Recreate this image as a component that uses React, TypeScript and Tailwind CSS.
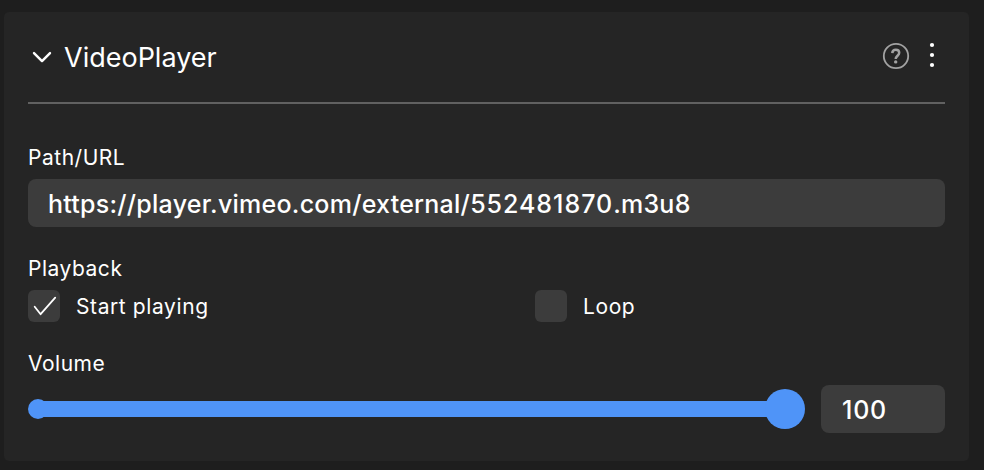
import React from "react";

function Label({ children, className }: { children: React.ReactNode; className: string }) {
  return (
    <div className={`whitespace-nowrap text-[21px] leading-7 tracking-[0.52px] ${className}`}>
      <span>{children}</span>
    </div>
  );
}

function Checkbox({ label, checked, className }: { label: string; checked?: boolean; className: string }) {
  return (
    <div className={`flex items-center gap-4 ${className}`}>
      <div className="size-8 shrink-0 rounded-[6px] bg-[#3c3c3c]">
        {checked && (
          <svg width="32" height="32" viewBox="0 0 32 32" fill="none" stroke="#fff" strokeWidth="1.8">
            <path d="M6.7 16.8L12.6 24.2L27.2 7.6" strokeLinejoin="round" strokeLinecap="round" />
          </svg>
        )}
      </div>
      <span className="whitespace-nowrap pt-0.5 text-[21px] leading-[30px] tracking-[0.6px]">{label}</span>
    </div>
  );
}

export default function App() {
  return (
    <div className="h-[470px] w-[984px] overflow-hidden bg-[#1e1e1e] pl-1 pt-3 font-['Inter','Liberation_Sans',sans-serif] text-white">
      <section className="h-[449px] w-[965px] rounded-[5px] bg-[#252525] px-6">
        <header className="flex h-[92px] items-center border-b-2 border-[#616161]">
          <svg width="28" height="28" viewBox="0 0 28 28" fill="none" stroke="#fff" strokeWidth="2.4" strokeLinecap="round" strokeLinejoin="round">
            <path d="M6 10.1L14 18.1L22 10.1" />
          </svg>
          <h1 className="ml-2 grow pt-0.5 text-[27px] leading-[88px]">VideoPlayer</h1>
          <svg width="66" height="40" viewBox="0 0 66 40" fill="none">
            <circle cx="17" cy="19" r="12.2" stroke="#a3a3a3" strokeWidth="1.8" />
            <path d="M13.3 16.1C13.5 11.5 20.2 11.8 20.2 15.8C20.2 18.6 16.7 18.9 16.7 22.1" stroke="#a3a3a3" strokeWidth="2.5" />
            <circle cx="16.7" cy="24.9" r="1.7" fill="#a3a3a3" />
            <circle cx="53" cy="8" r="2.1" fill="#fff" />
            <circle cx="53" cy="18" r="2.1" fill="#fff" />
            <circle cx="53" cy="28" r="2.1" fill="#fff" />
          </svg>
        </header>
        <Label className="mt-10">Path/URL</Label>
        <div className="mt-[7px] flex h-12 items-center rounded-[8px] bg-[#3c3c3c] px-5 pt-[3px] text-[25px] font-medium tracking-[0.25px]">
          https://player.vimeo.com/external/<span className="tracking-[0.98px]">552481870</span>.m3u8
        </div>
        <Label className="mt-7">Playback</Label>
        <div className="mt-[7px] flex">
          <Checkbox label="Start playing" checked className="w-[507px]" />
          <Checkbox label="Loop" className="grow" />
        </div>
        <Label className="mt-7">Volume</Label>
        <div className="mt-[7px] flex h-12 items-center gap-4">
          <svg width="777" height="48" viewBox="0 0 777 48" fill="#4f94f8">
            <circle cx="10" cy="24" r="10" />
            <rect x="10" y="16" width="747" height="16" />
            <circle cx="757" cy="24" r="20" />
          </svg>
          <div className="flex h-12 w-[124px] items-center rounded-[8px] bg-[#3c3c3c] pl-[21px] pt-[3px] text-[25px] font-medium tracking-[0.8px]">100</div>
        </div>
      </section>
    </div>
  );
}
